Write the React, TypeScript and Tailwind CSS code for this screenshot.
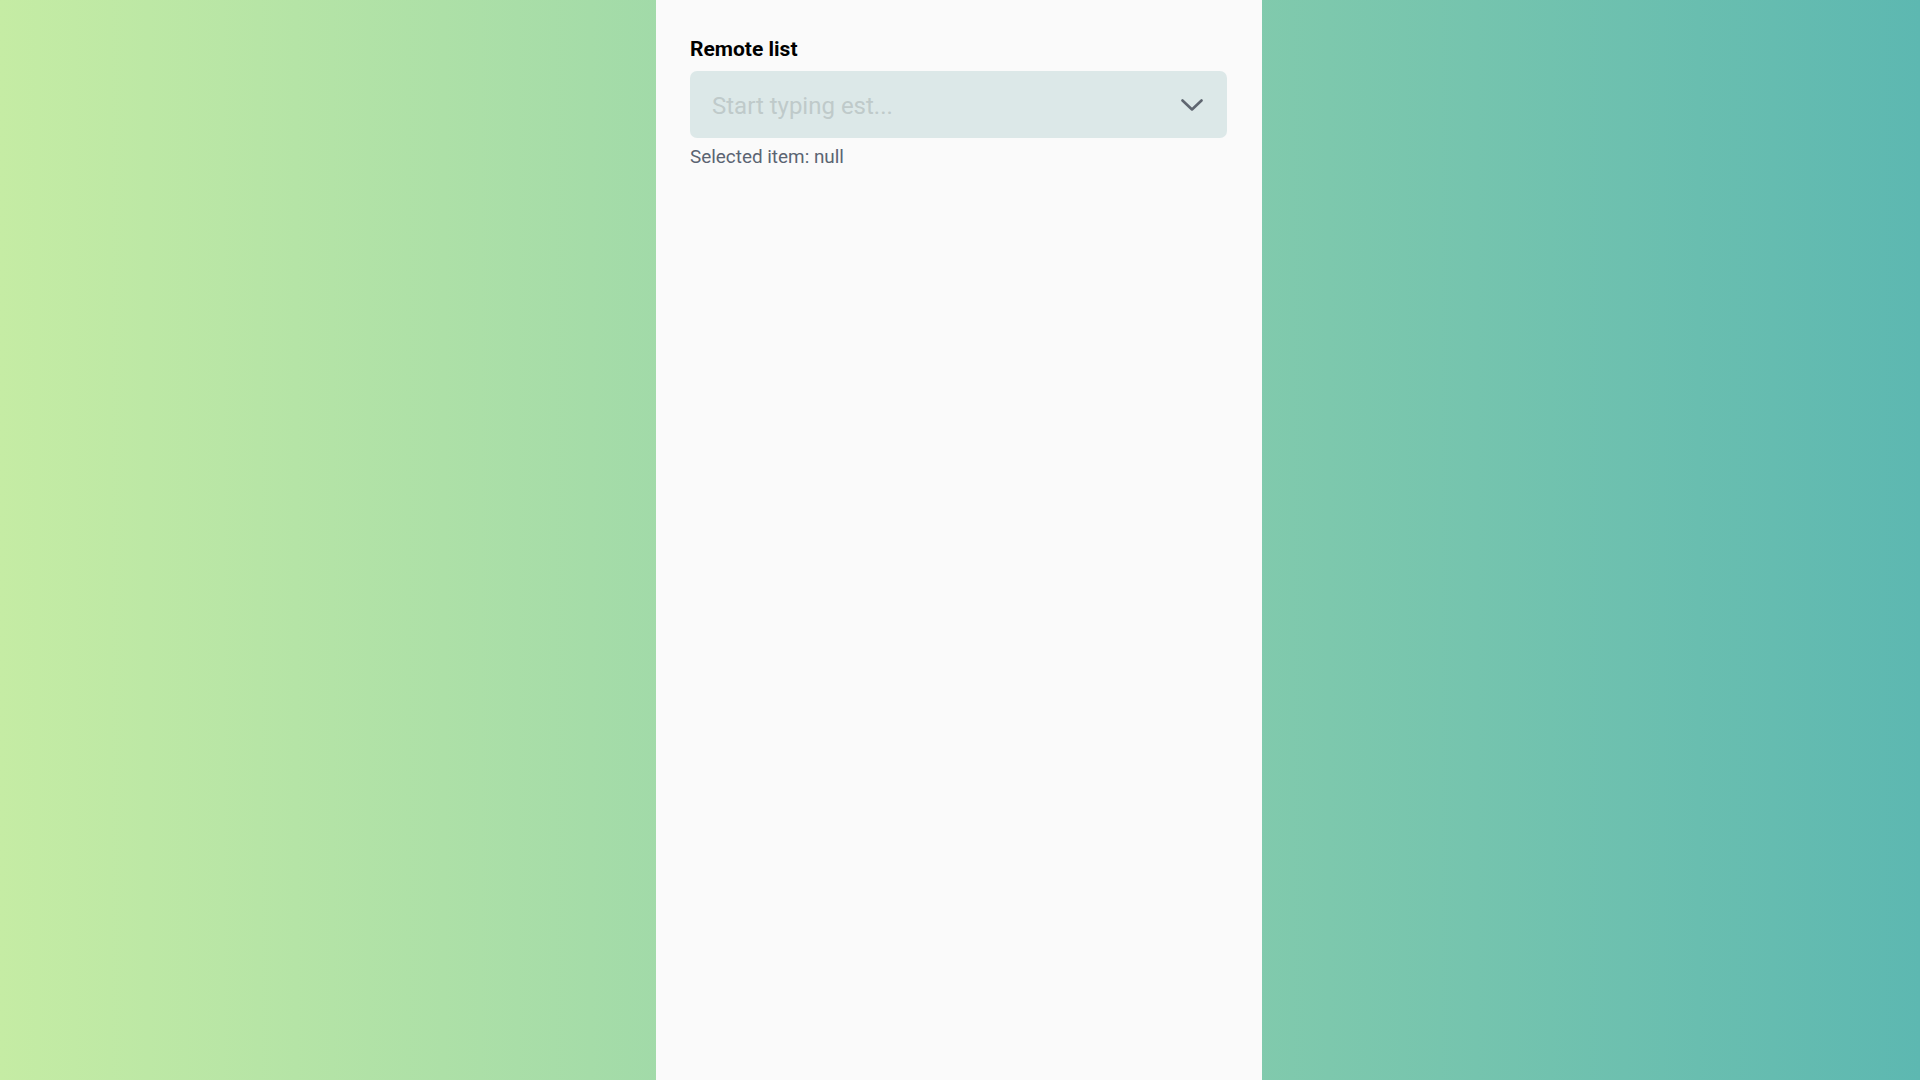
import { useState } from 'react';

function ChevronDown() {
  return (
    <svg width="22" height="13" viewBox="0 0 22 13" fill="none" aria-hidden>
      <polyline
        points="1.5,1.5 11,10.5 20.5,1.5"
        stroke="#5f6670"
        strokeWidth="2.6"
        strokeLinecap="round"
        strokeLinejoin="round"
      />
    </svg>
  );
}

function RemoteSelect() {
  const [query, setQuery] = useState('');
  const selected: string | null = null;

  return (
    <div>
      <label className="block text-[21px] leading-[28px] font-bold text-black">
        Remote list
      </label>
      <div className="mt-[8px] flex h-[67px] items-center rounded-[7px] bg-[#dce8e8] pt-[2px] pr-[24px] pl-[22px]">
        <input
          value={query}
          onChange={e => setQuery(e.currentTarget.value)}
          placeholder="Start typing est..."
          className="min-w-0 flex-1 bg-transparent text-[24px] text-[#374151] outline-none placeholder:text-[#bfcaca]"
        />
        <ChevronDown />
      </div>
      <p className="mt-[5px] text-[18.9px] leading-[28px] text-[#5b6472]">
        Selected item: {String(selected)}
      </p>
    </div>
  );
}

export default function App() {
  return (
    <div className="flex min-h-screen bg-[linear-gradient(to_right,#c5eca4,#5db8b1)] pr-[2px] font-['Roboto',_'Liberation_Sans',_sans-serif]">
      <main className="mx-auto min-h-screen w-[606px] bg-[#fafafa] pt-[35px] pr-[35px] pl-[34px]">
        <RemoteSelect />
      </main>
    </div>
  );
}
